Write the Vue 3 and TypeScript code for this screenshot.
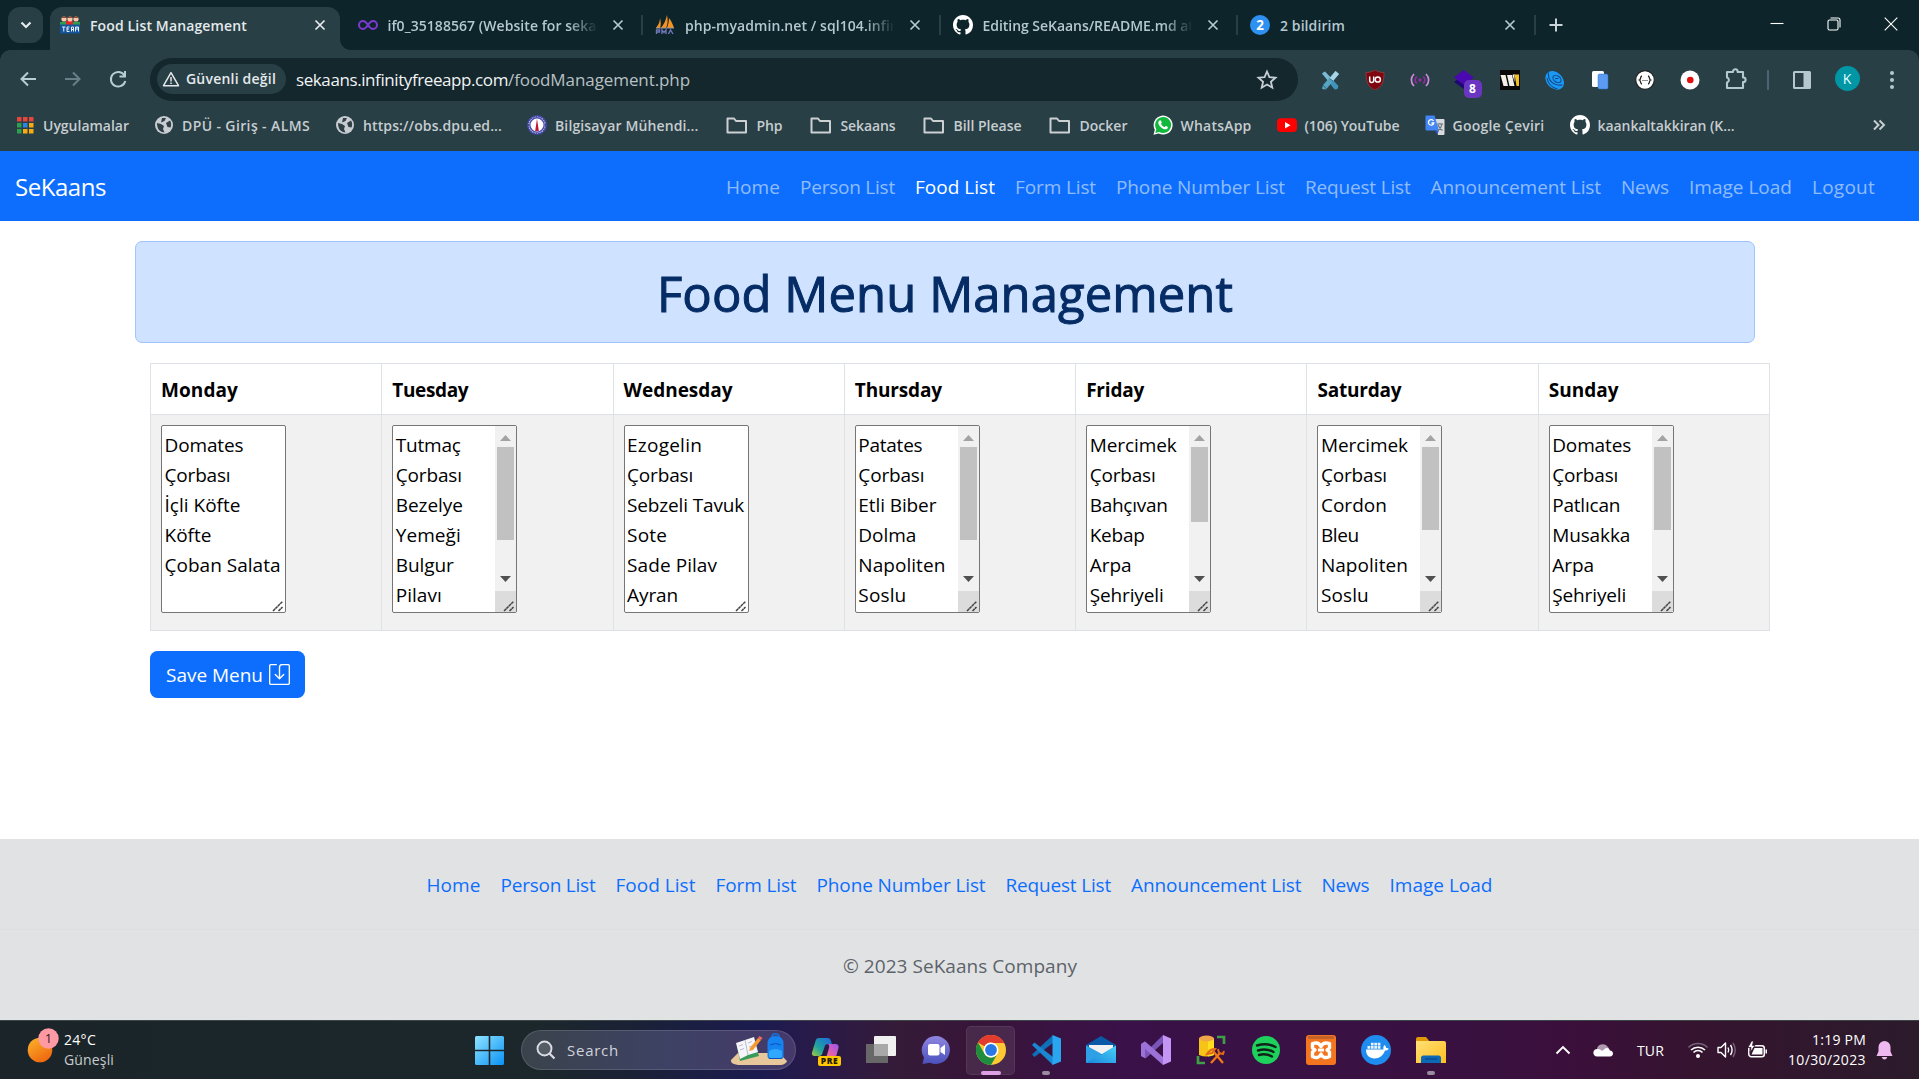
<script setup lang="ts">
import type { Directive } from 'vue'

interface Label { text: string; w: number }
interface Tab { icon: string; title: string; w: number; active?: boolean; fade?: boolean }
interface Bookmark extends Label { icon: string; folder?: boolean }
interface Day { name: string; w: number; lines: Label[]; thumb?: number }
interface TaskApp { icon: string; state?: 'active' | 'open' }

// Tracks a label so that it takes up the given width.
const vFit: Directive<HTMLElement, number> = {
  mounted(el, { value }) {
    const count = (el.textContent ?? '').length
    const natural = el.getBoundingClientRect().width
    el.style.letterSpacing = `${(value - natural) / count}px`
  },
}

const L = (text: string, w: number): Label => ({ text, w })

const tabs: Tab[] = [
  { icon: 'team', title: 'Food List Management', w: 157, active: true },
  { icon: 'infinity', title: 'if0_35188567 (Website for sekaans', w: 233, fade: true },
  { icon: 'pma', title: 'php-myadmin.net / sql104.infinity', w: 231, fade: true },
  { icon: 'github', title: 'Editing SeKaans/README.md at main', w: 249, fade: true },
  { icon: 'two', title: '2 bildirim', w: 65 },
]

const extensions = ['xtool', 'ublock', 'waves', 'layers', 'wbox', 'swirl', 'pages', 'json', 'record', 'puzzle']

const bookmarks: Bookmark[] = [
  { icon: 'apps', text: 'Uygulamalar', w: 86 },
  { icon: 'globe', text: 'DPÜ - Giriş - ALMS', w: 128 },
  { icon: 'globe', text: 'https://obs.dpu.ed...', w: 139 },
  { icon: 'seal', text: 'Bilgisayar Mühendi...', w: 143.5 },
  { icon: 'folder', text: 'Php', w: 26, folder: true },
  { icon: 'folder', text: 'Sekaans', w: 55, folder: true },
  { icon: 'folder', text: 'Bill Please', w: 68, folder: true },
  { icon: 'folder', text: 'Docker', w: 48, folder: true },
  { icon: 'whatsapp', text: 'WhatsApp', w: 71 },
  { icon: 'youtube', text: '(106) YouTube', w: 95 },
  { icon: 'translate', text: 'Google Çeviri', w: 92 },
  { icon: 'github', text: 'kaankaltakkiran (K...', w: 137 },
]

const links: Label[] = [
  L('Home', 54), L('Person List', 95), L('Food List', 80), L('Form List', 81), L('Phone Number List', 169),
  L('Request List', 105.5), L('Announcement List', 170.5), L('News', 48), L('Image Load', 103),
]
const navLinks: Label[] = [...links, L('Logout', 63)]

const domates = L('Domates', 79)
const corbasi = L('Çorbası', 66)
const mercimek = L('Mercimek', 87)
const napoliten = L('Napoliten', 87)
const soslu = L('Soslu', 48)
const arpa = L('Arpa', 42)
const sehriyeli = L('Şehriyeli', 74)

const days: Day[] = [
  { name: 'Monday', w: 77, lines: [domates, corbasi, L('İçli Köfte', 76), L('Köfte', 47), L('Çoban Salata', 116)] },
  { name: 'Tuesday', w: 76, thumb: 93, lines: [L('Tutmaç', 65), corbasi, L('Bezelye', 67), L('Yemeği', 65), L('Bulgur', 58), L('Pilavı', 46)] },
  { name: 'Wednesday', w: 109, lines: [L('Ezogelin', 75), corbasi, L('Sebzeli Tavuk', 117), L('Sote', 40), L('Sade Pilav', 90), L('Ayran', 51)] },
  { name: 'Thursday', w: 87, thumb: 93, lines: [L('Patates', 64), corbasi, L('Etli Biber', 78), L('Dolma', 58), napoliten, soslu] },
  { name: 'Friday', w: 58, thumb: 75, lines: [mercimek, corbasi, L('Bahçıvan', 78), L('Kebap', 55), arpa, sehriyeli] },
  { name: 'Saturday', w: 84, thumb: 83, lines: [mercimek, corbasi, L('Cordon', 66), L('Bleu', 38), napoliten, soslu] },
  { name: 'Sunday', w: 70, thumb: 83, lines: [domates, corbasi, L('Patlıcan', 68), L('Musakka', 78), arpa, sehriyeli] },
]

const apps: TaskApp[] = [
  { icon: 'copilot' }, { icon: 'taskview' }, { icon: 'chat' }, { icon: 'chrome', state: 'active' },
  { icon: 'vscode', state: 'open' }, { icon: 'mail' }, { icon: 'vs' }, { icon: 'dbtool' }, { icon: 'spotify' },
  { icon: 'xampp' }, { icon: 'docker' }, { icon: 'explorer', state: 'open' },
]
</script>

<template>
  <div class="screen">
    <svg class="sprite" width="0" height="0" aria-hidden="true">
      <defs>
        <linearGradient id="gWin" x1="0" y1="0" x2="1" y2="1"><stop offset="0" stop-color="#8fe3ff" /><stop offset="1" stop-color="#0a93f5" /></linearGradient>
        <linearGradient id="gSun" x1="0" y1="0" x2="0.6" y2="1"><stop offset="0" stop-color="#fbb62d" /><stop offset="1" stop-color="#f0680f" /></linearGradient>
        <linearGradient id="gCopA" x1="0" y1="1" x2="1" y2="0"><stop offset="0" stop-color="#a6c83c" /><stop offset=".4" stop-color="#1fa3a0" /><stop offset="1" stop-color="#2266e0" /></linearGradient>
        <linearGradient id="gCopB" x1="1" y1="0" x2="0" y2="1"><stop offset="0" stop-color="#9a55f0" /><stop offset=".6" stop-color="#e060b0" /><stop offset="1" stop-color="#ff8a60" /></linearGradient>
        <linearGradient id="gChat" x1="0" y1="0" x2="0" y2="1"><stop offset="0" stop-color="#8f86e0" /><stop offset="1" stop-color="#4a50bd" /></linearGradient>
        <linearGradient id="gMail" x1="0" y1="1" x2="1" y2="0"><stop offset="0" stop-color="#1a86dc" /><stop offset="1" stop-color="#48d0f8" /></linearGradient>
        <linearGradient id="gFold" x1="0" y1="0" x2="1" y2="1"><stop offset="0" stop-color="#ffe078" /><stop offset="1" stop-color="#ffbf1c" /></linearGradient>
      </defs>
      <symbol id="team" viewBox="0 0 20 20">
        <rect x="0" y="7" width="20" height="3" fill="#2e9e4a" /><rect x="6" y="6" width="7" height="4" fill="#e02828" />
        <circle cx="4" cy="4" r="2.6" fill="#f8c9a8" /><circle cx="10" cy="4" r="2.6" fill="#f8c9a8" /><circle cx="16" cy="4" r="2.6" fill="#f8c9a8" />
        <path d="M1.6 3a2.5 2.5 0 0 1 4.8 0zM7.6 3a2.5 2.5 0 0 1 4.8 0zM13.6 3a2.5 2.5 0 0 1 4.8 0z" fill="#8d4a38" />
        <rect x="0" y="9.500" width="20" height="9" fill="#14549c" />
        <path d="M2 12h3.500M3.750 12v4.500M9.500 12H7v4.500h2.500M7 14h2M11.500 16.500V12h2v4.500M11.500 14.500h2M15.500 16.500V12h3v4.500M17 12v3" stroke="#e8f2fa" fill="none" />
      </symbol>
      <symbol id="infinity" viewBox="0 0 20 20"><path d="M10 10C8 7 6.800 6 5 6a4 4 0 0 0 0 8c1.800 0 3-1 5-4s3.200-4 5-4a4 4 0 0 1 0 8c-1.800 0-3-1-5-4z" fill="none" stroke="#7a3ad0" stroke-width="2" /></symbol>
      <symbol id="pma" viewBox="0 0 20 20">
        <path d="M1 13C4 9 5 6 5 3c1 4 1 7 0 10zM6 13c3-4 5-8 6-13 1 5 1 9-1 13zM12 13c1-3 2-6 2-10 3 4 4 7 5 10z" fill="#f79420" /><path d="M1 13h18" stroke="#99a" />
        <path d="M1.500 19v-4h3v2h-3M7 19v-4l2 2.500L11 15v4M13.500 19l2-4 2.500 4" fill="none" stroke="#6f76b8" stroke-width="1.400" />
      </symbol>
      <symbol id="github" viewBox="0 0 16 16"><path fill="#fff" fill-rule="evenodd" d="M8 0C3.580 0 0 3.580 0 8c0 3.540 2.290 6.530 5.470 7.590.4.070.55-.17.55-.38 0-.19-.01-.82-.01-1.490-2.010.37-2.530-.49-2.690-.94-.09-.23-.48-.94-.82-1.130-.28-.15-.68-.52-.01-.53.63-.01 1.080.58 1.230.82.72 1.210 1.870.87 2.330.66.07-.52.28-.87.51-1.070-1.780-.2-3.640-.89-3.640-3.950 0-.87.31-1.590.82-2.150-.08-.2-.36-1.020.08-2.120 0 0 .67-.21 2.200.82.64-.18 1.320-.27 2-.27s1.360.09 2 .27c1.530-1.040 2.200-.82 2.200-.82.44 1.100.16 1.920.08 2.120.51.56.82 1.270.82 2.150 0 3.070-1.870 3.750-3.650 3.950.29.25.54.73.54 1.480 0 1.070-.01 1.930-.01 2.200 0 .21.15.46.55.38A8.010 8.010 0 0 0 16 8c0-4.420-3.580-8-8-8z" /></symbol>
      <symbol id="x" viewBox="0 0 12 12"><path d="M1.500 1.500l9 9M10.500 1.500l-9 9" fill="none" stroke="currentColor" stroke-width="1.700" /></symbol>

      <symbol id="xtool" viewBox="0 0 20 20"><path d="M2 3.500L5 1.500 18.500 16l-1 3-3 .5L8 11z" fill="#3f94bb" /><path d="M2 3.500L5 1.500l6 6.500-2.500 3z" fill="#7fb8d2" /><path d="M15.500 1l3.500 3L6 19.500l-4-.5 1-4z" fill="#57a3c4" /><path d="M15.500 1l3.500 3-6 7-3.500-2.500z" fill="#a8d4e4" /><path d="M3 15l3.500 4M9.500 8.500L13 11" stroke="#24596f" stroke-width=".8" /></symbol>
      <symbol id="ublock" viewBox="0 0 20 20"><path d="M10 0c3 2 6 2.500 9 2.500C19 12 17 17 10 20 3 17 1 12 1 2.500 4 2.500 7 2 10 0z" fill="#800610" stroke="#a44" stroke-width=".6" /><path d="M4.700 6.500v4a2 2 0 0 0 4 0v-4" fill="none" stroke="#fff" stroke-width="1.500" /><circle cx="12.800" cy="9.500" r="2.600" fill="none" stroke="#fff" stroke-width="1.500" /></symbol>
      <symbol id="waves" viewBox="0 0 20 20"><g fill="none" stroke="#b350c4" stroke-width="1.700"><path d="M4 4c-3.500 3.500-3.500 8.500 0 12M16 4c3.500 3.500 3.500 8.500 0 12" stroke="#c890d8" /><path d="M6.700 6.500c-2 2-2 5 0 7M13.300 6.500c2 2 2 5 0 7" stroke="#9a28aa" /></g><circle cx="10" cy="10" r="1.700" fill="#9a28aa" /></symbol>
      <symbol id="layers" viewBox="0 0 20 20"><path d="M0 12l9-7 9 8-8 6z" fill="#1d0870" /><path d="M0 7.500L9.500 0 20 7.500 10 15z" fill="#4a08b0" /></symbol>
      <symbol id="wbox" viewBox="0 0 20 20"><rect width="20" height="20" fill="#080808" /><path d="M.5 5h5l2.500 11H3.500z" fill="#f2efe6" /><path d="M7 5h5l2.500 11H9.500z" fill="#f2efe6" /><path d="M12.500 5l2-1v8z" fill="#fff" /><path d="M14.500 4.500H19V16h-2.500z" fill="#f4c020" /></symbol>
      <symbol id="swirl" viewBox="0 0 20 20"><ellipse cx="10" cy="10.500" rx="10.500" ry="8" transform="rotate(45 10 10)" fill="#1a98f6" /><path d="M3.500 2.500c-1 8 5 13.500 14 12.500M2 8c1 6 5 9.500 10.500 11" stroke="#144a80" fill="none" stroke-width="1.100" /><ellipse cx="12" cy="9" rx="4.500" ry="3" transform="rotate(35 12 9)" stroke="#144a80" fill="none" stroke-width="1.100" /><path d="M10 8.500h3.500" stroke="#144a80" /></symbol>
      <symbol id="pages" viewBox="0 0 20 20"><rect x="2" y="1" width="12" height="16" rx="1.500" fill="#fff" /><rect x="8" y="4" width="10" height="15" rx="1.500" fill="#5b9cf2" stroke="#3170c8" stroke-width=".5" /></symbol>
      <symbol id="json" viewBox="0 0 20 20"><circle cx="10" cy="10" r="9.300" fill="#fff" stroke="#222" stroke-width="1.200" /><path d="M7 6c-2 0-1 3.500-2.500 4C6 10.500 5 14 7 14M13 6c2 0 1 3.500 2.500 4-1.500.5-.5 4-2.500 4" fill="none" stroke="#222" stroke-width="1.300" /><path d="M7.500 10.500h1M9.500 10.500h1M11.500 10.500h1" stroke="#222" stroke-width="1.200" /></symbol>
      <symbol id="record" viewBox="0 0 20 20"><circle cx="10" cy="10" r="9.500" fill="#fff" /><circle cx="10.300" cy="10" r="3.300" fill="#e01010" /></symbol>
      <symbol id="puzzle" viewBox="0 0 22 22"><path d="M2 4h6V3.500a2.300 2.300 0 0 1 4.600 0V4H18v5.500h.3a2.300 2.300 0 0 1 0 4.600H18V20H2v-5.500a2.600 2.600 0 0 0 0-5z" fill="none" stroke="#b4c8d0" stroke-width="2.100" stroke-linejoin="round" /></symbol>

      <symbol id="apps" viewBox="0 0 20 20"><path fill="#e8453c" d="M2 2h4.500v4.500H2zM8 2h4.500v4.500H8zM14 2h4.500v4.500H14z" /><path fill="#2e9e4f" d="M2 8h4.500v4.500H2zM2 14h4.500v4.500H2z" /><path fill="#2b86e8" d="M8 8h4.500v4.500H8z" /><path fill="#f8ab10" d="M14 8h4.500v4.500H14zM8 14h4.500v4.500H8zM14 14h4.500v4.500H14z" /></symbol>
      <symbol id="globe" viewBox="0 0 20 20"><circle cx="10" cy="10" r="9" fill="#c8cdd2" /><path d="M3 8l4 1 3 2-1 3 1.500 3.500C6 17.500 3 14 3 8zM8 3h4l-1.500 3L7 7.500zM12 8l4-2.500c1.500 2 1.500 5 .5 7l-3-.5z" fill="#2f4147" /></symbol>
      <symbol id="seal" viewBox="0 0 20 20"><circle cx="10" cy="10" r="9" fill="#fff" stroke="#4448a8" stroke-width="2" stroke-dasharray="2.200 .5" /><circle cx="10" cy="10" r="7.200" fill="none" stroke="#4a50b0" stroke-width="1.500" /><path d="M10 3.500l1.800 12.500H8.200z" fill="#c01830" /></symbol>
      <symbol id="folder" viewBox="0 0 24 20"><path d="M3 3.500h6.500l2 2.500H21.500v11.500H3z" fill="none" stroke="#ccd0d3" stroke-width="2" stroke-linejoin="round" /></symbol>
      <symbol id="whatsapp" viewBox="0 0 20 20"><path d="M.5 19.700l1.300-5A9.500 9.500 0 1 1 5.700 18.500z" fill="#fff" /><path d="M2.300 18l1-3.800a8 8 0 1 1 2.900 2.800z" fill="#12b83c" /><path d="M6.500 5.500c1-.8 1.500-.3 2.300 1.700.2.700-.9 1.200-.7 1.700.8 1.500 1.700 2.300 3.200 3 .5.200 1.100-1.200 1.700-1 2 .9 2 1 1.700 2-.7 1.700-2.700 1.700-4.700.8C7.500 12.500 5.500 10 5.300 8c0-1.200.5-2 1.200-2.500z" fill="#fff" /></symbol>
      <symbol id="youtube" viewBox="0 0 20 20"><rect x="0" y="3.300" width="20" height="13.700" rx="4" fill="#fe0000" /><path d="M8 7l5.500 3.200L8 13.400z" fill="#fff" /></symbol>
      <symbol id="translate" viewBox="0 0 20 20"><path d="M9 4h9.500q1 0 1 1v14q0 1-1 1H13z" fill="#d8dade" /><path d="M1 .5h8.500l4.500 15H1.500q-1 0-1-1v-13q0-1 .5-1z" fill="#4285f4" /><path d="M10 15.500h4l-2 4z" fill="#2a56c6" /><path d="M8.500 6A2.700 2.700 0 1 0 8.800 8H6.500" stroke="#fff" fill="none" stroke-width="1.300" /><path d="M12 9h6M15 8v1M17 9c-.5 3-2 5-4 6.500M13 10c1 2.500 2.500 4 4.500 5.500" stroke="#68717c" fill="none" stroke-width="1.200" /></symbol>

      <symbol id="copilot" viewBox="0 0 30 30"><path d="M8 3h8.500c2 0 3 1 3.500 3l.8 3H17c-2 0-3 1-3.500 3l-2 6c-.5 2-1.500 3-3.500 3H3.500c-2 0-3-1.500-2.500-3.500L4.500 6C5 4 6 3 8 3z" fill="url(#gCopA)" /><path d="M16 9h8.500c2.500 0 3.500 2 3 4l-2 7c-.5 2-1.500 3-3.500 3h-9c2 0 2.500-1.500 3-3l2-7c.5-2 0-4-2-4z" fill="url(#gCopB)" /></symbol>
      <symbol id="taskview" viewBox="0 0 30 30"><rect x="8" y="1" width="22" height="20" rx="1" fill="#f0f0f0" /><path d="M0 9h22v19H0z" fill="#686868" /><path d="M8 9h14v12H8z" fill="#a8a8a8" /></symbol>
      <symbol id="chat" viewBox="0 0 30 30"><path d="M15 1a14 14 0 1 1-6 26.700L1.500 29 3 22.500A14 14 0 0 1 15 1z" fill="url(#gChat)" /><rect x="7" y="9" width="11.500" height="11.500" rx="2" fill="#fff" /><path d="M19.500 13l4.500-3.500v10.500L19.500 17z" fill="#fff" /></symbol>
      <symbol id="chrome" viewBox="0 0 30 30"><circle cx="15" cy="15" r="15" fill="#fcc934" /><path d="M2 7.500A15 15 0 0 1 28 7.500H15a7.500 7.500 0 0 0-6.500 3.750z" fill="#e33b2e" /><path d="M2 7.500A15 15 0 0 0 15 30l6.500-11.250A7.500 7.500 0 0 1 8.500 18.750z" fill="#1e8e3e" /><path d="M15 7.500h13" stroke="#e33b2e" /><circle cx="15" cy="15" r="7.500" fill="#fff" /><circle cx="15" cy="15" r="5.900" fill="#2a78e6" /></symbol>
      <symbol id="vscode" viewBox="0 0 30 30"><path d="M1 19.500l2.500 2.500L22 8V0L1 19.500z" fill="#0f6fb8" /><path d="M1 10l2.500-2.500L22 22v8z" fill="#1a87d2" /><path d="M21.500 0L30 3.500v23L21.500 30z" fill="#2aa5f0" /></symbol>
      <symbol id="mail" viewBox="0 0 30 30"><path d="M0 10L15 1l15 9v5H0z" fill="#0a5aa8" /><path d="M3 10h24v9H3z" fill="#f2f2f2" /><path d="M0 10.500l15 9 15-9V28H0z" fill="url(#gMail)" /><path d="M0 28l15-9.500-15-8z" fill="#2f9fe6" /></symbol>
      <symbol id="vs" viewBox="0 0 30 30"><path d="M0 9l4-2.500 6 5.500 12-12v8L4.500 23.500 0 21z" fill="#7a55b8" /><path d="M0 9l4-2.500L22 22v8L4 14v9l-4-2z" fill="#9c72d8" /><path d="M22 0l8 3.500v23L22 30z" fill="#c595f5" /></symbol>
      <symbol id="dbtool" viewBox="0 0 30 30"><path d="M3 3h15v17q-7.500 3-15 0z" fill="#f6c416" /><path d="M12 3h6v17l-6 1.500z" fill="#ffde20" /><ellipse cx="10.500" cy="3.500" rx="7.500" ry="3" fill="#f0a548" /><path d="M21 2h7v7M2 21v7h7" fill="none" stroke="#3f9f44" stroke-width="2.700" /><path d="M15 28l9-10M17 16l10 12" stroke="#f07818" stroke-width="2.300" /><path d="M11 19q3-5 8-5l-3 4zM22 14l1 4 4 1 1-3" fill="none" stroke="#e06a18" stroke-width="2" /></symbol>
      <symbol id="spotify" viewBox="0 0 30 30"><circle cx="15" cy="15" r="14" fill="#1ed05c" /><path d="M6 10.500q10-3 18.500 1.500M7 15.500q8.500-2.500 15.500 1.500M8 20q7-1.800 13 1.500" fill="none" stroke="#102418" stroke-width="2.500" stroke-linecap="round" /></symbol>
      <symbol id="xampp" viewBox="0 0 30 30"><rect width="30" height="30" rx="3" fill="#f4751f" /><path d="M2 1h26v3H2z" fill="#c4642a" /><path d="M6.500 8.500q6.500-2 8.500 3 2-5 8.500-3v4.500l-2.500 2 2.500 2v4.500q-6.500 3-8.500-2.500-2 5.500-8.500 2.500V17L9 15l-2.500-2z" fill="none" stroke="#fff" stroke-width="3.400" stroke-linejoin="round" /><path d="M12 15h6" stroke="#fff" stroke-width="3" /></symbol>
      <symbol id="docker" viewBox="0 0 30 30"><circle cx="15" cy="15" r="15" fill="#1f8df0" /><path d="M5 14.500h17.500c-.5-2 0-3.500 1-4.500 1.200 1 1.700 2 1.700 3 1.200-.2 2 .2 2.500.7-.7 1.300-2 1.900-3.700 1.900C22 21 18.500 23.500 13.500 23.500 8 23.500 5 20 5 14.500z" fill="#fff" /><path d="M6.500 11h2.700v2.700H6.500zM9.900 11h2.700v2.700H9.900zM13.300 11H16v2.700h-2.700zM16.700 11h2.700v2.700h-2.700zM9.900 7.700h2.700v2.700H9.900zM13.300 7.700H16v2.700h-2.700zM16.700 7.700h2.700v2.700h-2.700z" fill="#fff" opacity=".9" /></symbol>
      <symbol id="explorer" viewBox="0 0 30 30"><path d="M0 4q0-2 2-2h8l3 3.500V9H0z" fill="#e09a08" /><path d="M0 6h28q2 0 2 2v20H0z" fill="url(#gFold)" /><path d="M5 28v-5q0-2.500 2.500-2.500h15Q25 20.500 25 23v5z" fill="#0d68b8" /><path d="M9 24h12" stroke="#0a4f90" stroke-width="1.500" /></symbol>
    </svg>

    <header class="chrome">
      <div class="tabstrip">
        <div class="tabmenu"><svg width="14" height="10" viewBox="0 0 14 10"><path d="M2.500 2.500L7 7l4.500-4.500" /></svg></div>
        <div v-for="t in tabs" :key="t.title" class="tab" :class="{ active: t.active }">
          <div v-if="t.icon === 'two'" class="notice">2</div>
          <svg v-else class="ico"><use :href="'#' + t.icon" /></svg>
          <div class="title" :class="{ fade: t.fade }"><span v-fit="t.w">{{ t.title }}</span></div>
          <svg class="close"><use href="#x" /></svg>
        </div>
        <svg class="plus" width="14" height="14" viewBox="0 0 14 14"><path d="M7 .5v13M.5 7h13" /></svg>
        <div class="winbtns">
          <svg width="14" height="14" viewBox="0 0 14 14"><path d="M.5 6.500h13" /></svg>
          <svg width="14" height="14" viewBox="0 0 14 14"><rect x="1" y="3" width="10" height="10" rx="1.500" /><path d="M3.500 1h7.500q2 0 2 2v7.500" /></svg>
          <svg width="14" height="14" viewBox="0 0 14 14"><path d="M.7.7l12.600 12.600M13.300.7L.7 13.300" /></svg>
        </div>
      </div>

      <div class="toolbar">
        <div class="navbtns">
          <svg width="20" height="20" viewBox="0 0 20 20"><path d="M18 10H4M10 3.500L3.500 10l6.500 6.500" /></svg>
          <svg class="dim" width="20" height="20" viewBox="0 0 20 20"><path d="M2 10h14M10 3.500l6.500 6.500-6.500 6.500" /></svg>
          <svg width="20" height="20" viewBox="0 0 20 20"><path d="M16.500 6.500A7.300 7.300 0 1 0 17.300 12M17 2v5.500h-5.500" /></svg>
        </div>
        <div class="omnibox">
          <div class="chip">
            <svg width="18" height="16" viewBox="0 0 18 16"><path d="M9 1.700L1.500 14.700h15z" fill="none" stroke="#e4e8ea" stroke-width="1.500" stroke-linejoin="round" /><path d="M9 6v4.500M9 11.500v1.500" stroke="#e4e8ea" stroke-width="1.500" /></svg>
            <span v-fit="90">Güvenli değil</span>
          </div>
          <div class="url"><b v-fit="212">sekaans.infinityfreeapp.com</b><i v-fit="182">/foodManagement.php</i></div>
          <svg class="star" width="22" height="22" viewBox="0 0 22 22"><path d="M11 2.500l2.400 5.700 6.100.5-4.600 4 1.400 6L11 15.500l-5.300 3.200 1.400-6-4.600-4 6.100-.5z" fill="none" stroke="#c6cfd3" stroke-width="1.800" /></svg>
        </div>
        <div class="exts">
          <div v-for="e in extensions" :key="e" class="ext">
            <svg><use :href="'#' + e" /></svg>
            <span v-if="e === 'layers'" class="count">8</span>
          </div>
        </div>
        <div class="vsep"></div>
        <svg class="panel" width="18" height="18" viewBox="0 0 18 18"><path fill="#b4c8d0" fill-rule="evenodd" d="M1.500 0h15Q18 0 18 1.500v15q0 1.500-1.500 1.500h-15Q0 18 0 16.500v-15Q0 0 1.500 0zM2 2v14h8.500V2z" /></svg>
        <div class="avatar">K</div>
        <svg class="dots" width="6" height="20" viewBox="0 0 6 20"><circle cx="3" cy="3" r="2" /><circle cx="3" cy="10" r="2" /><circle cx="3" cy="17" r="2" /></svg>
      </div>

      <div class="bookmarks">
        <div v-for="b in bookmarks" :key="b.text" class="bm" :class="{ dir: b.folder }">
          <svg><use :href="'#' + b.icon" /></svg>
          <span v-fit="b.w">{{ b.text }}</span>
        </div>
        <svg class="more" width="14" height="12" viewBox="0 0 14 12"><path d="M2 1.500L6.500 6 2 10.500M7.500 1.500L12 6l-4.500 4.500" /></svg>
      </div>
    </header>

    <nav class="navbar">
      <span class="brand" v-fit="91">SeKaans</span>
      <ul>
        <li v-for="n in navLinks" :key="n.text" :class="{ on: n.text === 'Food List' }"><span v-fit="n.w">{{ n.text }}</span></li>
      </ul>
    </nav>

    <main>
      <div class="alert"><h1 v-fit="576">Food Menu Management</h1></div>
      <div class="menu">
        <section v-for="d in days" :key="d.name" class="day">
          <div class="head"><span v-fit="d.w">{{ d.name }}</span></div>
          <div class="body">
            <div class="area">
              <div class="lines"><div v-for="(l, i) in d.lines" :key="i"><span v-fit="l.w">{{ l.text }}</span></div></div>
              <div v-if="d.thumb" class="scroll">
                <svg class="up" width="11" height="6" viewBox="0 0 11 6"><path d="M0 6l5.500-6L11 6z" fill="#a3a3a3" /></svg>
                <div class="thumb" :style="{ height: d.thumb + 'px' }"></div>
                <svg class="down" width="11" height="6" viewBox="0 0 11 6"><path d="M0 0l5.500 6L11 0z" fill="#505050" /></svg>
                <div class="corner"></div>
              </div>
              <svg class="grip" width="12" height="12" viewBox="0 0 12 12"><path d="M1 11L10.500 1.500M6.500 11l4-4" stroke="#444" stroke-width="1.500" stroke-dasharray="3 .4" /></svg>
            </div>
          </div>
        </section>
      </div>
      <button class="save">
        <span v-fit="97">Save Menu</span>
        <svg width="21" height="21" viewBox="0 0 16 16"><path d="M5.500.5h-4a1 1 0 0 0-1 1v13a1 1 0 0 0 1 1h13a1 1 0 0 0 1-1v-13a1 1 0 0 0-1-1h-4.500q-2 0-2 2v8.700M4.800 8L8 11.200 11.200 8" fill="none" stroke="#fff" stroke-width="1.050" stroke-linecap="round" stroke-linejoin="round" /></svg>
      </button>
    </main>

    <footer>
      <ul><li v-for="n in links" :key="n.text"><span v-fit="n.w">{{ n.text }}</span></li></ul>
      <p><span v-fit="234">© 2023 SeKaans Company</span></p>
    </footer>

    <div class="taskbar">
      <div class="weather">
        <svg width="34" height="36" viewBox="0 0 34 36"><circle cx="13" cy="22" r="12.300" fill="url(#gSun)" /><circle cx="21.500" cy="10.500" r="10.200" fill="#ff99a4" /><text x="21.500" y="15" text-anchor="middle" font-family="Open Sans, sans-serif" font-size="13" fill="#3a1a20">1</text></svg>
        <div><p><span v-fit="32">24°C</span></p><p class="sub"><span v-fit="50">Güneşli</span></p></div>
      </div>
      <svg class="start" width="29" height="29" viewBox="0 0 29 29"><path fill="url(#gWin)" d="M1.500 0H13.700v13.700H0V1.500Q0 0 1.500 0zM15.300 0h12.200Q29 0 29 1.500v12.200H15.300zM0 15.300h13.700V29H1.500Q0 29 0 27.500zM15.300 15.300H29v12.200q0 1.500-1.500 1.500H15.300z" /></svg>
      <div class="search">
        <svg width="20" height="20" viewBox="0 0 20 20"><circle cx="8.500" cy="8.500" r="7" fill="#ffffff22" stroke="#dcdce4" stroke-width="1.900" /><path d="M13.500 13.500l5 5" stroke="#dcdce4" stroke-width="2.200" /></svg>
        <span v-fit="52">Search</span>
        <svg class="art" width="58" height="34" viewBox="0 0 58 34">
          <path d="M8 20h41l8 8q-1 3-6 4H8q-8-1-7-5z" fill="#e8c89a" />
          <path d="M7 13l20 4 2 6-19 5z" fill="#3b9a5a" /><path d="M6 10l9-3 3 15-8 4zM15 7l9-3 4 15-10 3z" fill="#f6f6fa" /><path d="M15 7l3 15M9 13l4-1.500M10 17l4-1.500M18 10l4-1.500M19 14l5-1.500" stroke="#b8bccc" />
          <path d="M20 15l8-10 3 2-8 10-4 1z" fill="#f49a30" /><path d="M28 5l1.500-2 3 2L31 7z" fill="#f06a60" />
          <path d="M42 4q0-3 3.500-3T49 4" fill="none" stroke="#1a6ad0" stroke-width="2" /><path d="M37.500 11q0-8 8-8t8 8v12q0 3-3 3h-10q-3 0-3-3z" fill="#1583f0" /><path d="M39 18q6.500-4 13 0v5q0 2-2 2h-9q-2 0-2-2z" fill="#30a8ff" /><path d="M40 12q5.500-3 11 0M39 25.500h13" fill="none" stroke="#0c52b8" />
        </svg>
      </div>
      <div class="apps">
        <div v-for="a in apps" :key="a.icon" class="app" :class="a.state">
          <svg><use :href="'#' + a.icon" /></svg>
          <span v-if="a.icon === 'copilot'" class="pre">PRE</span>
        </div>
      </div>
      <div class="tray">
        <svg class="t1" width="16" height="10" viewBox="0 0 16 10"><path d="M1.500 8.500L8 2l6.500 6.500" fill="none" stroke="#fff" stroke-width="1.900" /></svg>
        <svg class="t2" width="20" height="14" viewBox="0 0 20 14"><path d="M4 8a6 6 0 0 1 11-4l3 5z" fill="#b09ab0" /><path d="M4 13.500a3.800 3.800 0 1 1 1-7.500c2 0 3 1 4 2l4-3c3 0 3.500 1.500 3.500 2.500 2.500 0 3.500 1.500 3.500 3s-1 3-3 3z" fill="#fff" /></svg>
        <span class="lang" v-fit="27">TUR</span>
        <svg class="t3" width="22" height="18" viewBox="0 0 22 18"><g fill="none" stroke="#fff" stroke-width="1.500"><path d="M1.500 6.500a13.500 13.500 0 0 1 19 0" stroke="#76607a" /><path d="M4 9a10 10 0 0 1 14 0M6.500 11.500a6.300 6.300 0 0 1 9 0" /></g><circle cx="11" cy="15" r="2" fill="#fff" /></svg>
        <svg class="t4" width="21" height="18" viewBox="0 0 21 18"><g fill="none" stroke="#fff" stroke-width="1.400" stroke-linejoin="round"><path d="M1 6.500h3L8.500 2v14L4 11.500H1z" /><path d="M11 6.500q1.500 2.500 0 5M13.500 4q3.200 5 0 10" /><path d="M16 2q4.500 7 0 14" stroke="#76607a" /></g></svg>
        <svg class="t5" width="21" height="18" viewBox="0 0 21 18"><rect x="1.800" y="4.700" width="15.500" height="11" rx="2.500" fill="none" stroke="#fff" stroke-width="1.500" /><path d="M7.500 7h8v6.500H4.500z" fill="#fff" /><path d="M18.500 8.500h1.500v4h-1.500z" fill="#fff" /><path d="M4.500 0L1 6.500h3l-1 5 5-7H5.500l1-4.500z" fill="#fff" stroke="#351530" stroke-width=".8" /></svg>
        <div class="clock"><p><span v-fit="54">1:19 PM</span></p><p><span v-fit="78">10/30/2023</span></p></div>
        <svg class="bell" width="17" height="20" viewBox="0 0 17 20"><path d="M8.500 1a6 6 0 0 1 6 6v4.500L16.500 16H.5l2-4.500V7a6 6 0 0 1 6-6zM5.700 17h5.600q-.8 2.500-2.800 2.500T5.700 17z" fill="#f0b8f0" /></svg>
      </div>
    </div>
  </div>
</template>

<style>
body { margin: 0; background: #fff; overflow: hidden; }
</style>

<style scoped>
.screen { width: 1919px; height: 1079px; display: flex; flex-direction: column; font-family: "Open Sans", "Noto Sans", sans-serif; font-size: 19px; color: #212529; overflow: hidden; }
.screen *, .screen *::before, .screen *::after { box-sizing: border-box; }
.sprite { position: absolute; }
svg { display: block; flex: none; }
span, b, i, h1 { white-space: nowrap; display: inline-block; font-style: normal; }
ul, p, h1 { margin: 0; padding: 0; list-style: none; }

.chrome { height: 151px; flex: none; background: #293f46; }
.tabstrip { height: 50px; background: #0d242a; display: flex; align-items: flex-start; position: relative; }
.tabstrip::before, .tabstrip::after { content: ""; position: absolute; top: 50px; width: 10px; height: 10px; }
.tabstrip::before { left: 0; background: radial-gradient(circle at 10px 10px, transparent 9.500px, #0d242a 10px); }
.tabstrip::after { right: 0; background: radial-gradient(circle at 0 10px, transparent 9.500px, #0d242a 10px); }
.tabmenu { width: 35px; height: 36px; margin: 7px 6px 0 8px; border-radius: 12px; background: #293f46; display: flex; align-items: center; justify-content: center; flex: none; }
.tabmenu path { fill: none; stroke: #e4eaec; stroke-width: 2.200; }
.tab { width: 297.500px; height: 50px; flex: none; padding: 0 0 0 11px; display: flex; align-items: center; position: relative; color: #b4c8d0; font-size: 14px; font-weight: 600; }
.tab::after { content: ""; position: absolute; right: 1px; top: 15px; width: 2px; height: 20px; background: #293f46; }
.tab.active { color: #e4eaec; }
.tab.active::after { right: auto; left: 291px; top: 40px; width: 10px; height: 10px; background: radial-gradient(circle at 10px 0, transparent 9.500px, #293f46 10px); }
.tab.active::before { content: ""; position: absolute; left: 1px; top: 7px; width: 290px; height: 43px; border-radius: 12px 12px 0 0; background: #293f46; }
.tab.active > * { position: relative; }
.tab .ico { width: 20px; height: 20px; }
.notice { width: 20px; height: 20px; flex: none; border-radius: 50%; background: #2e90f0; color: #fff; font-size: 13.500px; font-weight: 700; line-height: 20px; text-align: center; }
.tab .title { width: 208px; margin-left: 10px; overflow: hidden; }
.tab .title.fade { -webkit-mask-image: linear-gradient(90deg, #000 180px, transparent 210px); mask-image: linear-gradient(90deg, #000 180px, transparent 210px); }
.tab .close { width: 12px; height: 12px; margin-left: 16px; }
.plus { margin: 18px 0 0 12px; }
.plus path { fill: none; stroke: #c8d4d8; stroke-width: 2; }
.winbtns { margin: 17px 21px 0 auto; display: flex; gap: 43px; }
.winbtns path, .winbtns rect { fill: none; stroke: #fff; stroke-width: 1.100; }

.toolbar { height: 51px; padding-top: 8px; display: flex; align-items: center; }
.navbtns { display: flex; gap: 25px; width: 150px; padding-left: 17.500px; flex: none; margin-top: -1px; }
.navbtns path { fill: none; stroke: #b8ccd4; stroke-width: 2; }
.navbtns .dim { opacity: .45; }
.omnibox { width: 1148px; height: 43px; border-radius: 22px; background: #13272d; display: flex; align-items: center; padding-left: 7px; flex: none; }
.chip { width: 129px; height: 30px; border-radius: 15px; background: #293f46; display: flex; align-items: center; padding-left: 5px; gap: 6px; color: #e4eaec; font-size: 14px; font-weight: 600; margin-top: -2px; }
.url { margin-left: 10px; font-size: 17px; width: 440px; color: #f1f3f4; display: flex; }
.url b { font-weight: 400; }
.url i { color: #b9c0c3; }
.star { margin-left: auto; margin-right: 20px; }
.exts { display: flex; margin-left: 9.500px; flex: none; }
.ext { width: 45px; height: 24px; display: flex; align-items: center; justify-content: center; position: relative; }
.ext svg { width: 20px; height: 20px; }
.ext:nth-child(4) svg { margin-right: 2px; }
.ext:last-child svg { width: 22px; height: 22px; margin: -2px 0 0 2px; }
.count { position: absolute; left: 21px; top: 12px; width: 18px; height: 18px; border-radius: 5px; background: #6a35c0; color: #fff; font-size: 12px; font-weight: 700; line-height: 18px; text-align: center; }
.vsep { width: 2px; height: 20px; background: #4b6670; margin-left: 9px; flex: none; }
.panel { margin-left: 24px; }
.avatar { width: 25px; height: 25px; border-radius: 50%; background: #0096a6; color: #e8ffff; font-size: 14px; line-height: 25px; text-align: center; margin-left: 24px; margin-top: -2px; flex: none; }
.dots { margin-left: 29px; fill: #b4c8d0; }

.bookmarks { height: 50px; padding: 0 0 2px 15px; display: flex; align-items: center; gap: 25px; font-size: 14px; font-weight: 600; color: #c6cdd0; }
.bm { display: flex; align-items: center; gap: 8px; flex: none; }
.bm svg { width: 20px; height: 20px; }
.bm.dir svg { width: 25px; }
.more { margin: 0 33px 0 auto; }
.more path { fill: none; stroke: #c6cdd0; stroke-width: 2; }

.navbar { height: 70px; flex: none; background: #0d6efd; display: flex; align-items: center; justify-content: space-between; padding: 2px 44px 0 15px; }
.brand { color: #fff; font-size: 24px; line-height: 36px; }
.navbar ul { display: flex; gap: 20px; color: rgba(255, 255, 255, .55); }
.navbar .on { color: #fff; }

main { height: 618px; flex: none; padding: 20px 149px 0 150px; }
.alert { width: 1620px; height: 102px; margin-left: -15px; border: 1px solid #9ec5fe; border-radius: 7px; background: #cfe2ff; color: #052c65; display: flex; align-items: center; justify-content: center; padding-top: 2px; }
.alert h1 { font-size: 49px; font-weight: 500; line-height: 60px; -webkit-text-stroke: 1px #052c65; }
.menu { width: 1620px; height: 268px; margin-top: 20px; display: flex; border: 1px solid #dee2e6; }
.day { flex: 1 1 0; display: flex; flex-direction: column; }
.day + .day { border-left: 1px solid #dee2e6; }
.head { height: 51px; border-bottom: 1px solid #dee2e6; padding: 2px 10px 0 10px; display: flex; align-items: center; font-weight: 700; color: #000; }
.body { flex: 1; background: #f1f1f1; padding: 10px 10px 0; }
.area { width: 125px; height: 188px; border: 1px solid #767676; border-radius: 2px; background: #fff; display: flex; justify-content: space-between; position: relative; overflow: hidden; color: #000; }
.lines { padding: 4px 0 0 2.500px; line-height: 30px; width: 100px; }
.lines div { height: 30px; }
.scroll { width: 21px; background: #f1f1f1; display: flex; flex-direction: column; align-items: center; flex: none; }
.up { margin-top: 9px; }
.thumb { width: 17px; margin-top: 6px; background: #c1c1c1; }
.down { margin-top: auto; margin-bottom: 9px; }
.corner { width: 21px; height: 21px; background: #dcdcdc; }
.grip { position: absolute; right: 1px; bottom: 0; fill: none; }
.save { margin-top: 20px; width: 155px; height: 47px; border: 0; border-radius: 7.500px; background: #0d6efd; color: #fff; font: inherit; padding: 0 0 0 16px; display: flex; align-items: center; gap: 6px; }

footer { height: 181px; flex: none; background: #e1e2e4; text-align: center; }
footer ul { height: 91px; border-bottom: 1px solid #dddee0; display: flex; gap: 20px; justify-content: center; align-items: center; color: #0d6efd; padding-top: 1px; }
footer p { height: 90px; line-height: 73px; color: #5c636a; padding-left: 1px; }

.taskbar { height: 59px; flex: none; border-top: 1px solid #3d4548; display: flex; align-items: center; color: #fff; font-size: 14px; background: linear-gradient(90deg, #1b2529 0, #1b272b 540px, #1a2137 640px, #1c1b50 760px, #2a1a48 820px, #351b38 900px, #371539 970px, #3a1148 1120px, #39113f 1500px, #3b0f3c 1560px, #35142f 1700px, #2b1b2b 1919px); }
.weather { width: 475px; padding-left: 27px; display: flex; gap: 3px; flex: none; align-items: center; line-height: 20px; }
.weather > svg { margin-top: -9px; }
.weather .sub { color: #c8ccce; }
.search { width: 275px; height: 40px; margin-left: 17px; border-radius: 20px; border: 1px solid #ffffff22; background: linear-gradient(90deg, #3a434b, #3d4263 50%, #45396b); display: flex; align-items: center; padding-left: 14px; gap: 11px; font-size: 15px; color: #d2d2dc; flex: none; }
.search .art { margin-left: auto; margin-right: 7px; }
.apps { display: flex; gap: 6px; margin-left: 5px; margin-right: 1px; flex: none; }
.app { width: 49px; height: 49px; border-radius: 5px; display: flex; align-items: center; justify-content: center; position: relative; }
.app svg { width: 30px; height: 30px; }
.pre { position: absolute; left: 17px; top: 30px; width: 23px; height: 10px; border-radius: 2px; background: #ffc800; color: #251a00; font-size: 8.500px; font-weight: 800; line-height: 10px; text-align: center; letter-spacing: .6px; }
.app.active { background: #ffffff16; box-shadow: inset 0 0 0 1px #ffffff12; }
.app.active::after, .app.open::after { content: ""; position: absolute; bottom: 0; left: 20.500px; width: 8px; height: 4px; border-radius: 2px; background: #9b8ba0; }
.app.active::after { left: 14.500px; width: 20px; background: #dda0e4; }
.tray { flex: 1; display: flex; align-items: center; }
.t1 { margin-left: 99px; }
.t2 { margin-left: 22px; }
.lang { margin-left: 24px; font-size: 14px; }
.t3 { margin-left: 23px; }
.t4 { margin-left: 8px; }
.t5 { margin-left: 9px; }
.clock { width: 98px; text-align: right; line-height: 20px; }
.bell { margin-left: 10px; }
</style>
